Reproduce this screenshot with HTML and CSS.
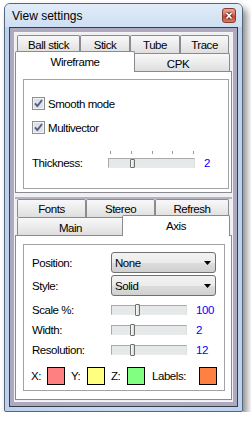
FILE: index.html
```html
<!DOCTYPE html>
<html>
<head>
<meta charset="utf-8">
<link rel="stylesheet" href="styles.css">
</head>
<body>
<div class="window">
  <div class="titlebar">
    <span class="title">View settings</span>
    <div class="close">
      <svg width="12" height="13" viewBox="0 0 12 13"><path d="M3.5 4 L8.5 9.5 M8.5 4 L3.5 9.5" stroke="#6a2a22" stroke-width="3.4" fill="none"/><path d="M3.5 4 L8.5 9.5 M8.5 4 L3.5 9.5" stroke="#fff" stroke-width="1.8" fill="none"/></svg>
    </div>
  </div>
  <div class="client">
    <div class="inner">
      <div class="tabctl upper">
        <div class="tabrow">
          <div class="tab t-ball">Ball stick</div>
          <div class="tab t-stick">Stick</div>
          <div class="tab t-tube">Tube</div>
          <div class="tab t-trace">Trace</div>
        </div>
        <div class="tabrow">
          <div class="tab sel t-wire">Wireframe</div>
          <div class="tab t-cpk">CPK</div>
        </div>
        <div class="page page-upper">
          <div class="group group-upper">
            <div class="check-row">
              <svg class="cb" width="13" height="13" viewBox="0 0 13 13"><rect x="0.5" y="0.5" width="12" height="12" fill="#f2f2f2" stroke="#8e8f8f"/><rect x="2" y="2" width="9" height="9" fill="#dfe0e6"/><path d="M3 6.3 L5.4 9 L10 3" fill="none" stroke="#485c8c" stroke-width="1.8"/></svg>
              <span>Smooth mode</span>
            </div>
            <div class="check-row second">
              <svg class="cb" width="13" height="13" viewBox="0 0 13 13"><rect x="0.5" y="0.5" width="12" height="12" fill="#f2f2f2" stroke="#8e8f8f"/><rect x="2" y="2" width="9" height="9" fill="#dfe0e6"/><path d="M3 6.3 L5.4 9 L10 3" fill="none" stroke="#485c8c" stroke-width="1.8"/></svg>
              <span>Multivector</span>
            </div>
            <div class="thick-row">
              <span class="lbl-thick">Thickness:</span>
              <div class="slider-ticked">
                <div class="ticks"><i></i><i></i><i></i><i></i><i></i></div>
                <div class="track track-upper"><div class="thumb thumb-small" style="left:21px"></div></div>
              </div>
              <span class="val val-upper">2</span>
            </div>
          </div>
        </div>
      </div>
      <div class="splitter"></div>
      <div class="tabctl lower">
        <div class="tabrow">
          <div class="tab t-fonts">Fonts</div>
          <div class="tab t-stereo">Stereo</div>
          <div class="tab t-refresh">Refresh</div>
        </div>
        <div class="tabrow">
          <div class="tab t-main">Main</div>
          <div class="tab sel t-axis">Axis</div>
        </div>
        <div class="page page-lower">
          <div class="group group-lower">
            <div class="row row-select">
              <span class="lbl">Position:</span>
              <div class="select"><span>None</span><svg width="7" height="4" viewBox="0 0 7 4"><path d="M0 0 H7 L3.5 4 Z" fill="#000"/></svg></div>
            </div>
            <div class="row row-select second-select">
              <span class="lbl">Style:</span>
              <div class="select"><span>Solid</span><svg width="7" height="4" viewBox="0 0 7 4"><path d="M0 0 H7 L3.5 4 Z" fill="#000"/></svg></div>
            </div>
            <div class="row row-slider first-slider">
              <span class="lbl">Scale %:</span>
              <div class="track track-lower"><div class="thumb" style="left:23px"></div></div>
              <span class="val">100</span>
            </div>
            <div class="row row-slider">
              <span class="lbl">Width:</span>
              <div class="track track-lower"><div class="thumb" style="left:18px"></div></div>
              <span class="val">2</span>
            </div>
            <div class="row row-slider">
              <span class="lbl">Resolution:</span>
              <div class="track track-lower"><div class="thumb" style="left:18px"></div></div>
              <span class="val">12</span>
            </div>
            <div class="row row-colors">
              <span class="clbl c-short">X:</span><span class="swatch sw-x"></span>
              <span class="clbl c-short">Y:</span><span class="swatch sw-y"></span>
              <span class="clbl c-short">Z:</span><span class="swatch sw-z"></span>
              <span class="clbl c-long">Labels:</span><span class="swatch sw-l"></span>
            </div>
          </div>
        </div>
      </div>
    </div>
  </div>
</div>
</body>
</html>
```
FILE: styles.css
```css
* { box-sizing: border-box; }
html, body { margin: 0; padding: 0; background: #fff; }
body {
  font-family: "Liberation Sans", Arial, sans-serif;
  font-size: 11.5px;
  letter-spacing: -0.45px;
  color: #000;
}
.window {
  margin: 3px 0 0 4px;
  width: 239px;
  height: 409px;
  border: 1px solid #55667c;
  border-radius: 6px 6px 2px 2px;
  background: linear-gradient(90deg, #bcd2ec, #c9dbf1 50%, #bcd2ec);
  padding: 0 4px 4px;
  display: flex;
  flex-direction: column;
  box-shadow: 4px 5px 7px rgba(0,0,0,0.45);
}
.titlebar {
  height: 23px;
  margin: 0 -4px;
  padding: 0 6px 0 7px;
  display: flex;
  align-items: center;
  background: linear-gradient(#e1ecf8, #cddff2);
  border-radius: 5px 5px 0 0;
}
.title {
  flex: 1;
  font-size: 12px;
  letter-spacing: 0;
  line-height: 14px;
  color: #000;
}
.close {
  width: 14px;
  height: 15px;
  border: 1px solid #8a3a2e;
  border-radius: 3px;
  background: linear-gradient(#eba597, #d5705d 45%, #c4452f 55%, #d87a64);
  display: flex;
  align-items: center;
  justify-content: center;
}
.client {
  flex: 1;
  border: 1px solid #363c48;
  background: #adaabf;
  padding: 4px;
  display: flex;
}
.inner {
  flex: 1;
  border: 1px solid #f4f4f8;
  background: #f0f0f0;
  display: flex;
  flex-direction: column;
}
.tabctl { display: flex; flex-direction: column; }
.tabctl.upper { margin-top: 2px; height: 158px; }
.tabctl.lower { height: 201px; }
.splitter {
  height: 6px;
  border-bottom: 2px solid #b4b2c4;
}
.tabrow {
  display: flex;
  align-items: flex-end;
  height: 18px;
  padding-left: 2px;
}
.tab {
  height: 18px;
  border: 1px solid #898b93;
  border-bottom: none;
  border-radius: 2px 2px 0 0;
  background: linear-gradient(#f8f8f8, #ececec 50%, #dedede);
  display: flex;
  align-items: center;
  justify-content: center;
  white-space: nowrap;
}
.tab.sel {
  height: 21px;
  margin-top: -2px;
  margin-bottom: -1px;
  background: #fff;
  position: relative;
  z-index: 1;
  padding-bottom: 1px;
}
.t-ball { width: 63px; }
.t-stick { width: 50px; }
.t-tube { width: 50px; }
.t-trace { width: 49px; }
.t-wire { width: 120px; margin-left: -2px; margin-right: -1px; }
.t-cpk { width: 96px; padding-right: 8px; padding-top: 2px; }
.t-fonts { width: 69px; }
.t-stereo { width: 69px; }
.t-refresh { width: 74px; }
.t-main { width: 107px; padding-top: 2px; }
.t-axis { width: 108px; margin-left: -2px; }
.page {
  flex: 1;
  border: 1px solid #898b93;
  background: #fff;
  display: flex;
}
.page-upper { padding: 7px 2px 3px 7px; }
.page-lower { padding: 8px 6px 8px 7px; }
.group {
  flex: 1;
  border: 1px solid #a3a3a3;
  display: flex;
  flex-direction: column;
}
.group-upper { padding: 17px 0 0 8px; }
.group-lower { padding: 7px 0 0 8px; }
.check-row {
  display: flex;
  align-items: center;
  height: 13px;
  gap: 3px;
}
.check-row.second { margin-top: 11px; }
.cb { display: block; flex: none; }
.thick-row {
  display: flex;
  align-items: flex-end;
  margin-top: 17px;
}
.lbl-thick { width: 76px; height: 10px; line-height: 10px; }
.slider-ticked { width: 87px; display: flex; flex-direction: column; }
.ticks {
  height: 4px;
  margin-bottom: 3px;
  padding: 0 1px 0 2px;
  display: flex;
  justify-content: space-between;
}
.ticks i { width: 1px; height: 3px; background: #9a9a9a; display: block; }
.track {
  position: relative;
  height: 10px;
  background: #e6e9e9;
  border: 1px solid;
  border-color: #a9abab #dcdede #e9ebeb #a9abab;
}
.track-upper { width: 87px; }
.track-lower { width: 76px; }
.thumb {
  position: absolute;
  top: -2px;
  width: 5px;
  height: 12px;
  border: 1px solid #6f6f6f;
  border-radius: 1px;
  background: linear-gradient(90deg, #fdfdfd, #d8d8d8);
}
.thumb-small { top: 0; height: 9px; }
.val { color: #0000ff; margin-left: 9px; }
.val-upper { margin-left: 9px; height: 10px; line-height: 10px; }
.row { display: flex; align-items: center; }
.lbl { width: 79px; flex: none; }
.row-select { height: 21px; }
.second-select { margin-top: 2px; }
.select {
  width: 105px;
  height: 21px;
  border: 1px solid #707070;
  border-radius: 3px;
  background: linear-gradient(#f3f3f3, #ebebeb 50%, #dddddd 51%, #d0d0d0);
  display: flex;
  align-items: center;
  justify-content: space-between;
  padding: 0 4px 0 3px;
}
.select svg { display: block; }
.row-slider { height: 20px; }
.first-slider { margin-top: 4px; }
.row-colors { height: 20px; margin-top: 6px; margin-left: -1px; }
.clbl { flex: none; }
.c-short { width: 16px; }
.c-long { width: 47px; margin-left: 1px; }
.swatch {
  width: 18px;
  height: 18px;
  border: 1px solid #000;
  margin-right: 6px;
  flex: none;
}
.sw-x { background: #ff8080; }
.sw-y { background: #ffff80; }
.sw-z { background: #80ff80; }
.sw-l { background: #ff8040; }
```
